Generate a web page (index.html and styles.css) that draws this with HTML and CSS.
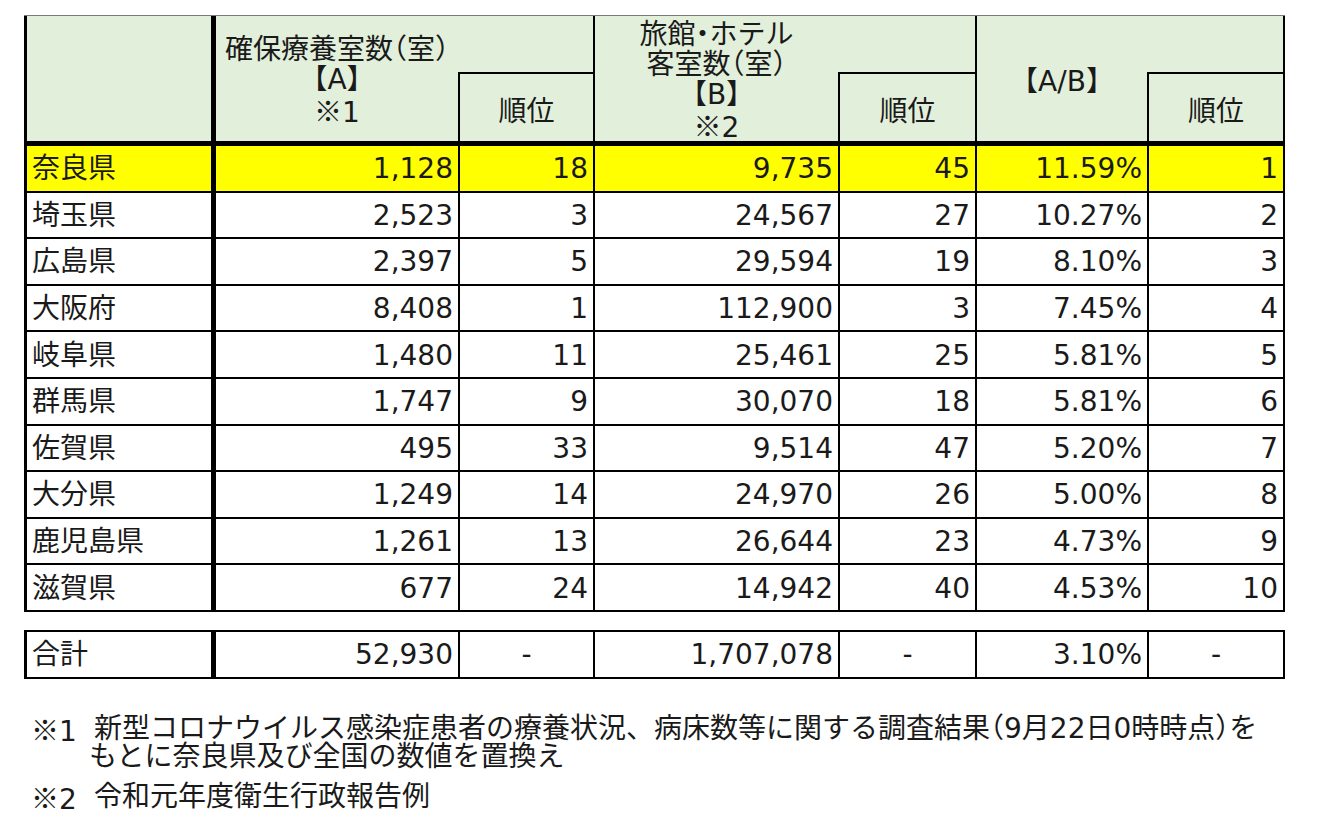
FILE: index.html
```html
<!DOCTYPE html>
<html lang="ja">
<head>
<meta charset="utf-8">
<title>確保療養室数</title>
<link rel="stylesheet" href="styles.css">
</head>
<body>
<div class="page">
  <div class="grid main">
    <div class="hd corner"></div>
    <div class="hd hA"><span><span class="hh">確保療養室数（室）</span><br><span class="hh">【A】</span><br><span class="k">※</span>1</span></div>
    <div class="hd fill f3"></div>
    <div class="hd rank r3"><span class="hh">順位</span></div>
    <div class="hd hB"><span><span class="hh">旅館・ホテル</span><br><span class="hh">客室数（室）</span><br><span class="hh">【B】</span><br><span class="k">※</span>2</span></div>
    <div class="hd fill f5"></div>
    <div class="hd rank r5"><span class="hh">順位</span></div>
    <div class="hd hAB"><span class="hh">【A/B】</span></div>
    <div class="hd fill f7"></div>
    <div class="hd rank r7"><span class="hh">順位</span></div>

    <div class="c name hl">奈良県</div><div class="c num hl">1,128</div><div class="c num hl">18</div><div class="c num hl">9,735</div><div class="c num hl">45</div><div class="c num hl">11.59%</div><div class="c num hl">1</div>
    <div class="c name">埼玉県</div><div class="c num">2,523</div><div class="c num">3</div><div class="c num">24,567</div><div class="c num">27</div><div class="c num">10.27%</div><div class="c num">2</div>
    <div class="c name">広島県</div><div class="c num">2,397</div><div class="c num">5</div><div class="c num">29,594</div><div class="c num">19</div><div class="c num">8.10%</div><div class="c num">3</div>
    <div class="c name">大阪府</div><div class="c num">8,408</div><div class="c num">1</div><div class="c num">112,900</div><div class="c num">3</div><div class="c num">7.45%</div><div class="c num">4</div>
    <div class="c name">岐阜県</div><div class="c num">1,480</div><div class="c num">11</div><div class="c num">25,461</div><div class="c num">25</div><div class="c num">5.81%</div><div class="c num">5</div>
    <div class="c name">群馬県</div><div class="c num">1,747</div><div class="c num">9</div><div class="c num">30,070</div><div class="c num">18</div><div class="c num">5.81%</div><div class="c num">6</div>
    <div class="c name">佐賀県</div><div class="c num">495</div><div class="c num">33</div><div class="c num">9,514</div><div class="c num">47</div><div class="c num">5.20%</div><div class="c num">7</div>
    <div class="c name">大分県</div><div class="c num">1,249</div><div class="c num">14</div><div class="c num">24,970</div><div class="c num">26</div><div class="c num">5.00%</div><div class="c num">8</div>
    <div class="c name">鹿児島県</div><div class="c num">1,261</div><div class="c num">13</div><div class="c num">26,644</div><div class="c num">23</div><div class="c num">4.73%</div><div class="c num">9</div>
    <div class="c name">滋賀県</div><div class="c num">677</div><div class="c num">24</div><div class="c num">14,942</div><div class="c num">40</div><div class="c num">4.53%</div><div class="c num">10</div>
  </div>

  <div class="grid total">
    <div class="c name">合計</div><div class="c num">52,930</div><div class="c mid">-</div><div class="c num">1,707,078</div><div class="c mid">-</div><div class="c num">3.10%</div><div class="c mid">-</div>
  </div>

  <div class="notes">
    <div class="note"><span class="mark"><span class="k">※</span>1</span><span class="text">新型コロナウイルス感染症患者の療養状況、病床数等に関する調査結果<span class="h">（</span>9月22日0時時点<span class="h">）</span>を<br><span class="l2">もとに奈良県及び全国の数値を置換え</span></span></div>
    <div class="note n2"><span class="mark"><span class="k">※</span>2</span><span class="text">令和元年度衛生行政報告例</span></div>
  </div>
</div>
</body>
</html>
```

FILE: styles.css
```css
* { box-sizing: border-box; }
html, body { margin: 0; padding: 0; background: #fff; }
body {
  font-family: "DejaVu Sans", "Noto Sans CJK JP", sans-serif;
  color: #1a1a1a;
}
.page {
  padding: 15px 0 0 24px;
}
.grid {
  display: grid;
  grid-template-columns: 187px 242px 133px 243px 135px 170px 134px;
  column-gap: 2px;
  row-gap: 2px;
  background: #000;
  width: max-content;
  padding: 0 2px 2px 3px;
}
.main {
  border-top: 1px solid #7a7a7a;
  grid-template-rows: 56px 70px repeat(10, 44.6px);
}
.total {
  margin-top: 18px;
  padding-top: 2px;
  grid-template-rows: 45px;
}
.hd {
  background: #e2efda;
  display: flex;
  align-items: center;
  justify-content: center;
  text-align: center;
  font-size: 28px;
  line-height: 30px;
}
.hh { font-feature-settings: "halt"; }
.k { font-family: "Noto Sans CJK JP", sans-serif; }
.corner { grid-column: 1; grid-row: 1 / 3; border-right: 3px solid #000; border-bottom: 3px solid #000; }
.hA { grid-column: 2; grid-row: 1 / 3; border-bottom: 3px solid #000; padding-top: 5px; }
.hB { grid-column: 4; grid-row: 1 / 3; border-bottom: 3px solid #000; padding-top: 6px; }
.hAB { grid-column: 6; grid-row: 1 / 3; border-bottom: 3px solid #000; padding-top: 7px; }
.fill { grid-row: 1; margin-left: -2px; }
.f3 { grid-column: 3; }
.f5 { grid-column: 5; }
.f7 { grid-column: 7; }
.rank { grid-row: 2; border-bottom: 3px solid #000; padding-top: 8px; }
.r3 { grid-column: 3; }
.r5 { grid-column: 5; }
.r7 { grid-column: 7; }

.c {
  background: #fff;
  display: flex;
  align-items: center;
  font-size: 28px;
  line-height: 32px;
  white-space: nowrap;
  padding: 2px 5px 0 5px;
}
.c.hl { background: #ffff00; }
.name { border-right: 3px solid #000; padding-left: 5px; }
.num { justify-content: flex-end; }
.mid { justify-content: center; }

.notes {
  margin-top: 36px;
  padding-left: 7px;
  font-size: 28px;
  line-height: 28px;
}
.note {
  display: flex;
  white-space: nowrap;
}
.n2 { margin-top: 12px; }
.mark { width: 58px; flex: none; }
.text { display: block; text-indent: 5px; }
.l2 { display: inline-block; text-indent: 0; }
.h { font-feature-settings: "halt"; }
```
